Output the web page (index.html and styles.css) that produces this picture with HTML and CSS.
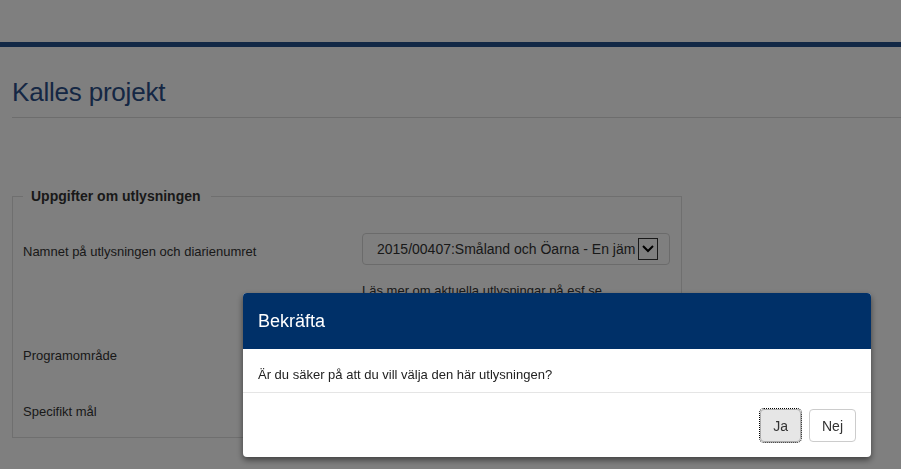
FILE: index.html
```html
<!DOCTYPE html>
<html lang="sv">
<head>
  <meta charset="utf-8">
  <link rel="stylesheet" href="styles.css">
</head>
<body>
  <div class="top"></div>
  <div class="bar"></div>

  <div class="page">
    <h1 class="title">Kalles projekt</h1>

    <fieldset class="box">
      <legend>Uppgifter om utlysningen</legend>

      <div class="row">
        <div class="label">Namnet på utlysningen och diarienumret</div>
        <div class="field">
          <div class="select">
            <span class="select-text">2015/00407:Småland och Öarna - En jäm</span>
            <span class="arrow">
              <svg width="14" height="10" viewBox="0 0 14 10"><path d="M2 2 L7 7 L12 2" fill="none" stroke="#000" stroke-width="2"/></svg>
            </span>
          </div>
          <div class="hint">Läs mer om aktuella utlysningar på esf.se</div>
        </div>
      </div>

      <div class="row plain first">
        <div class="label">Programområde</div>
      </div>
      <div class="row plain last">
        <div class="label">Specifikt mål</div>
      </div>
    </fieldset>
  </div>

  <div class="overlay"></div>

  <div class="modal">
    <div class="modal-head">Bekräfta</div>
    <div class="modal-body">Är du säker på att du vill välja den här utlysningen?</div>
    <div class="modal-foot">
      <button class="btn btn-focus">Ja</button>
      <button class="btn">Nej</button>
    </div>
  </div>
</body>
</html>
```

FILE: styles.css
```css
body {
  margin: 0;
  background: #fff;
  font-family: "Liberation Sans", Arial, sans-serif;
  color: #333;
}

.top {
  height: 42px;
  background: #fff;
}

.bar {
  height: 5px;
  background: #25508c;
}

.page {
  padding: 0 0 0 12px;
}

.title {
  margin: 0;
  padding-top: 30px;
  height: 40px;
  font-size: 26px;
  font-weight: normal;
  color: #2a4e88;
  border-bottom: 1px solid #dadada;
  letter-spacing: -0.2px;
}

.box {
  margin: 70px 0 0 0;
  width: 648px;
  padding: 0 10px 0 10px;
  border: 1px solid #dedede;
}

.box legend {
  margin-left: 0;
  padding: 0 10px 0 8px;
  font-size: 14px;
  font-weight: bold;
  color: #333;
}

.row {
  display: flex;
  align-items: flex-start;
  font-size: 13px;
}

.row .label {
  width: 339px;
  padding-top: 40px;
}

.field {
  padding-top: 29px;
}

.select {
  display: flex;
  align-items: center;
  width: 308px;
  height: 32px;
  border: 1px solid #d6d6d6;
  border-radius: 4px;
  box-sizing: border-box;
  padding: 0 11px 0 14px;
  font-size: 14px;
  color: #333;
}

.select-text {
  flex: 1;
  white-space: nowrap;
}

.arrow {
  display: flex;
  align-items: center;
  justify-content: center;
  width: 18px;
  height: 20px;
  border: 1px solid #333;
  margin-left: 1px;
}

.hint {
  margin-top: 18px;
  font-size: 13px;
  color: #333;
}

.row.plain .label {
  padding-top: 20px;
  height: 36px;
}

.row.plain.first .label {
  padding-top: 50px;
}

.row.plain.last .label {
  height: 33px;
}

.overlay {
  position: fixed;
  inset: 0;
  background: rgba(0, 0, 0, 0.5);
}

.modal {
  position: fixed;
  left: 243px;
  top: 293px;
  width: 628px;
  background: #fff;
  border-radius: 4px;
  box-shadow: 0 3px 6px rgba(0, 0, 0, 0.5);
  overflow: hidden;
}

.modal-head {
  height: 56px;
  box-sizing: border-box;
  padding: 18px 15px 0;
  background: #003068;
  color: #fff;
  font-size: 18px;
}

.modal-body {
  height: 44px;
  box-sizing: border-box;
  padding: 18px 15px 0;
  font-size: 13px;
  color: #222;
  border-bottom: 1px solid #e5e5e5;
}

.modal-foot {
  display: flex;
  justify-content: flex-end;
  gap: 8px;
  padding: 16px 15px 15px;
}

.btn {
  height: 33px;
  padding: 0 12px;
  font-family: "Liberation Sans", Arial, sans-serif;
  font-size: 14px;
  color: #333;
  background: #fff;
  border: 1px solid #ccc;
  border-radius: 4px;
}

.btn-focus {
  background: #e6e6e6;
  border-color: #adadad;
  outline: 1px dotted #000;
  outline-offset: 0;
}
```
